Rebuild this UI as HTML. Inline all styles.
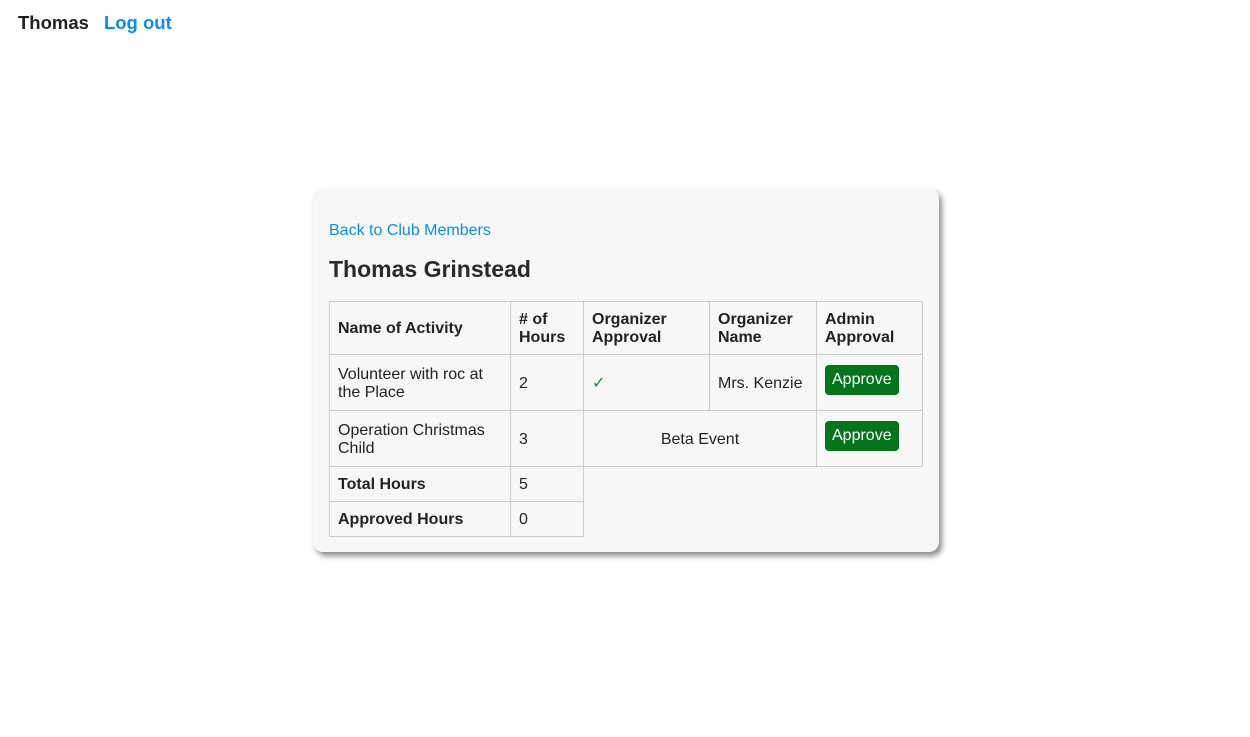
<!DOCTYPE html>
<html><head><style>
body{margin:0;width:1250px;height:737px;background:#fff;font-family:"Liberation Sans",Arial,sans-serif;color:#222;position:relative;overflow:hidden}
.top{position:absolute;top:12px;left:18px;font-size:18.5px;font-weight:bold}
.top a{color:#0a8ee8;margin-left:15px;text-decoration:none}
.card{position:absolute;left:313px;top:188px;width:626px;height:364px;background:#f7f7f7;border-radius:10px;box-shadow:3px 4px 6px rgba(0,0,0,.45)}
.back{position:absolute;left:16px;top:34px;font-size:16px;color:#0a8ee8}
h1{position:absolute;left:16px;top:68px;margin:0;font-size:23px;font-weight:bold;color:#2a2a2a}
table{position:absolute;left:16px;top:113px;border-collapse:collapse;font-size:16px;table-layout:fixed}
td,th{border:1px solid #ccc;padding:2px 8px 0;text-align:left;vertical-align:middle;line-height:18px}
th{font-weight:bold}
.btn{display:inline-block;background:#03741b;color:#fff;border-radius:4px;padding:6px 7px;font-size:16px;position:relative;top:-4px}
</style></head><body>
<div class="top">Thomas<a>Log out</a></div>
<div class="card">
<div class="back">Back to Club Members</div>
<h1>Thomas Grinstead</h1>
<table>
<colgroup><col style="width:181px"><col style="width:73px"><col style="width:126px"><col style="width:107px"><col style="width:106px"></colgroup>
<tr style="height:53px"><th>Name of Activity</th><th># of Hours</th><th>Organizer Approval</th><th>Organizer Name</th><th>Admin Approval</th></tr>
<tr style="height:56px"><td>Volunteer with roc at the Place</td><td>2</td><td style="color:#1a8a2a">✓</td><td>Mrs. Kenzie</td><td><span class="btn">Approve</span></td></tr>
<tr style="height:56px"><td>Operation Christmas Child</td><td>3</td><td colspan="2" style="text-align:center">Beta Event</td><td><span class="btn">Approve</span></td></tr>
<tr style="height:35px"><th>Total Hours</th><td>5</td><td colspan="3" rowspan="2" style="border:none"></td></tr>
<tr style="height:35px"><th>Approved Hours</th><td>0</td></tr>
</table>
</div>
</body></html>
